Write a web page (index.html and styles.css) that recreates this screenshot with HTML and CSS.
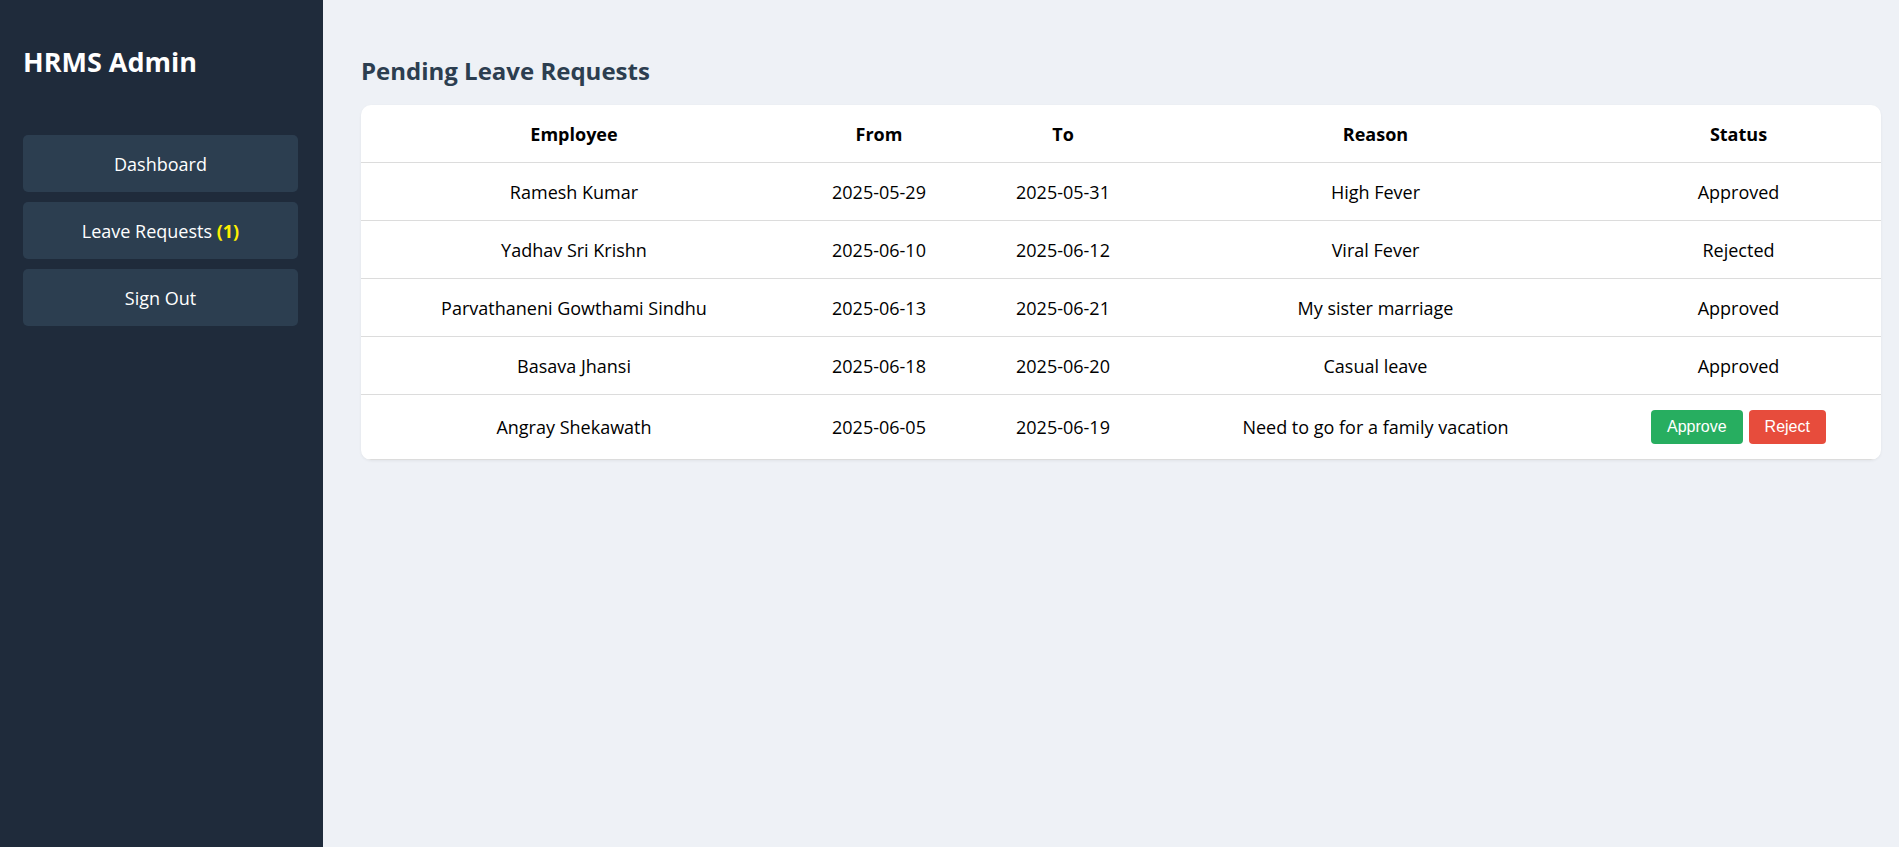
FILE: index.html
```html
<!DOCTYPE html>
<html lang="en">
<head>
<meta charset="utf-8">
<title>HRMS Admin</title>
<link rel="stylesheet" href="styles.css">
</head>
<body>
<div class="layout">
  <aside class="sidebar">
    <h2 class="brand">HRMS Admin</h2>
    <nav class="nav">
      <a class="nav-btn" href="#">Dashboard</a>
      <a class="nav-btn" href="#">Leave Requests <span class="count">(1)</span></a>
      <a class="nav-btn" href="#">Sign Out</a>
    </nav>
  </aside>
  <main class="main">
    <h2 class="page-title">Pending Leave Requests</h2>
    <div class="card">
      <table class="leave-table">
        <colgroup>
          <col class="c-emp"><col class="c-date"><col class="c-date"><col class="c-reason"><col class="c-status">
        </colgroup>
        <thead>
          <tr><th>Employee</th><th>From</th><th>To</th><th>Reason</th><th>Status</th></tr>
        </thead>
        <tbody>
          <tr><td>Ramesh Kumar</td><td>2025-05-29</td><td>2025-05-31</td><td>High Fever</td><td>Approved</td></tr>
          <tr><td>Yadhav Sri Krishn</td><td>2025-06-10</td><td>2025-06-12</td><td>Viral Fever</td><td>Rejected</td></tr>
          <tr><td>Parvathaneni Gowthami Sindhu</td><td>2025-06-13</td><td>2025-06-21</td><td>My sister marriage</td><td>Approved</td></tr>
          <tr><td>Basava Jhansi</td><td>2025-06-18</td><td>2025-06-20</td><td>Casual leave</td><td>Approved</td></tr>
          <tr class="pending"><td>Angray Shekawath</td><td>2025-06-05</td><td>2025-06-19</td><td>Need to go for a family vacation</td><td><button class="btn approve">Approve</button><button class="btn reject">Reject</button></td></tr>
        </tbody>
      </table>
    </div>
  </main>
</div>
</body>
</html>
```

FILE: styles.css
```css
* { box-sizing: border-box; }
html, body { margin: 0; padding: 0; height: 100%; }
body {
  font-family: "Open Sans", "Noto Sans", sans-serif;
  background: #eef1f6;
  color: #000;
}
.layout {
  display: flex;
  min-height: 100vh;
}
.sidebar {
  width: 323px;
  flex-shrink: 0;
  background: #1f2b3b;
  padding: 43px 25px 24px 23px;
  display: flex;
  flex-direction: column;
}
.brand {
  margin: 0;
  color: #fff;
  font-size: 27px;
  font-weight: 700;
  line-height: 38px;
}
.nav {
  margin-top: 54px;
  display: flex;
  flex-direction: column;
  gap: 10px;
}
.nav-btn {
  display: flex;
  align-items: center;
  justify-content: center;
  height: 57px;
  background: #2c3e50;
  border-radius: 5px;
  color: #fff;
  text-decoration: none;
  font-size: 18px;
  white-space: pre;
}
.count {
  color: #ffee00;
  font-weight: 700;
}
.main {
  flex: 1;
  padding: 53px 18px 20px 38px;
}
.page-title {
  margin: 0 0 17px;
  color: #2c3e50;
  font-size: 24px;
  font-weight: 700;
  line-height: 35px;
}
.card {
  background: #fff;
  border-radius: 10px;
  overflow: hidden;
  box-shadow: 0 1px 3px rgba(0,0,0,0.06);
}
.leave-table {
  width: 100%;
  border-collapse: collapse;
  table-layout: fixed;
  font-size: 18px;
  line-height: 25px;
}
.c-emp { width: 426px; }
.c-date { width: 184px; }
.c-reason { width: 441px; }
.c-status { width: 285px; }
.leave-table th,
.leave-table td {
  padding: 17px 8px 15px;
  text-align: center;
  border-bottom: 1px solid #dcdcdc;
  white-space: nowrap;
}
.leave-table th { font-weight: 700; }
.pending td { padding-top: 15px; padding-bottom: 15px; }
.btn {
  font-family: "Liberation Sans", Arial, sans-serif;
  font-size: 16px;
  line-height: 18px;
  padding: 8px 16px;
  border: none;
  border-radius: 4px;
  color: #fff;
  vertical-align: middle;
  cursor: pointer;
}
.btn + .btn { margin-left: 6px; }
.approve { background: #27ae60; }
.reject { background: #e74c3c; }
```
